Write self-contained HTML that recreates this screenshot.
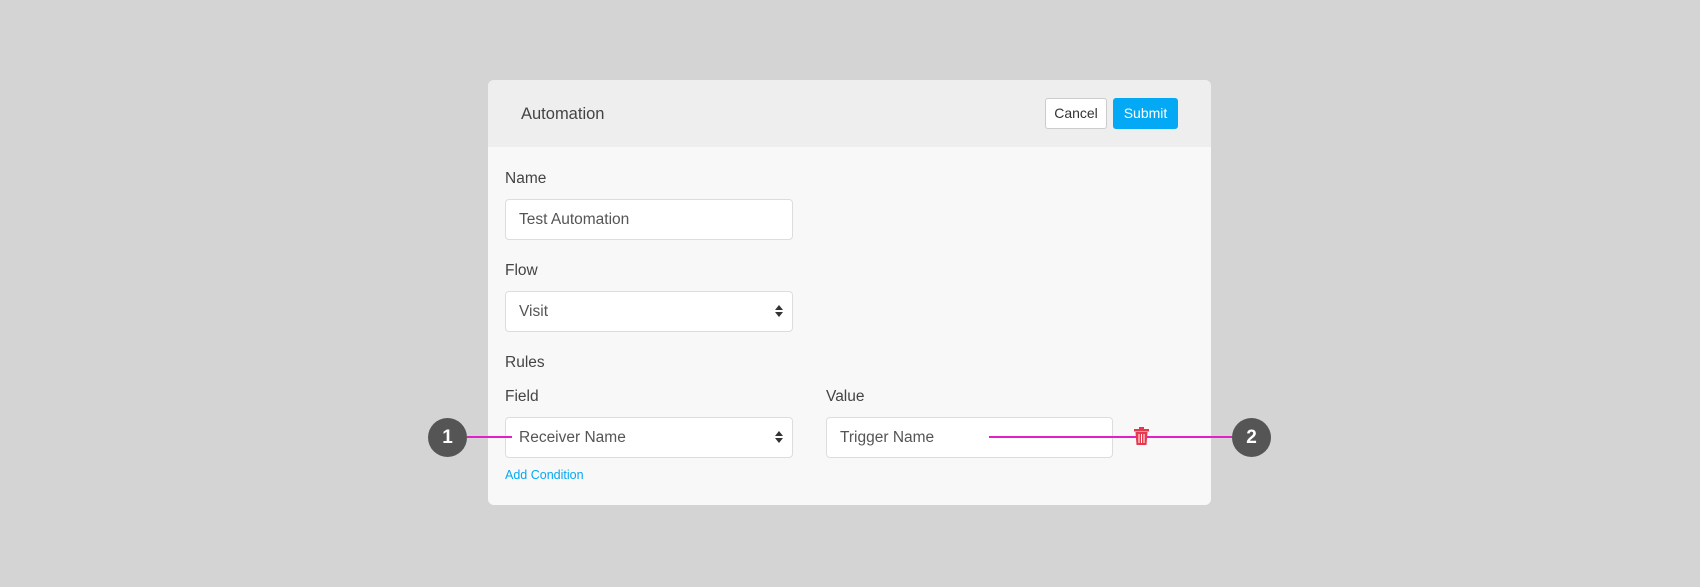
<!DOCTYPE html><html><head><style>
body{margin:0;width:1700px;height:587px;background:#d4d4d4;font-family:"Liberation Sans",sans-serif;position:relative;overflow:hidden;color:#444}
.card{position:absolute;left:488px;top:80px;width:723px;height:425px;background:#f8f8f8;border-radius:6px;overflow:hidden}
.hd{height:67px;background:#eee;position:relative}
.a{position:absolute}
.lbl{position:absolute;font-size:15.5px;color:#444}
.inp{position:absolute;background:#fff;border:1px solid #ddd;border-radius:4px;box-sizing:border-box;height:41px;font-size:15.5px;color:#555;padding-left:13px;line-height:40px}
.arr{position:absolute;right:13px;top:13px;width:0;height:0}
.arr:before{content:"";position:absolute;left:-4px;top:0;border:4px solid transparent;border-bottom:5px solid #333;border-top:0}
.arr:after{content:"";position:absolute;left:-4px;top:7px;border:4px solid transparent;border-top:5px solid #333;border-bottom:0}
.c{position:absolute;width:39px;height:39px;border-radius:50%;background:#555;color:#fff;font-weight:bold;font-size:19px;text-align:center;line-height:39px}
.ln{position:absolute;height:2px;background:#e020c8}
</style></head><body>
<div class="card">
<div class="hd">
<div class="a" style="left:33px;top:25px;font-size:16.5px;color:#444">Automation</div>
<div class="a" style="left:557px;top:18px;width:62px;height:31px;box-sizing:border-box;background:#fff;border:1px solid #ccc;border-radius:3px;font-size:14px;text-align:center;line-height:29px;color:#333">Cancel</div>
<div class="a" style="left:625px;top:18px;width:65px;height:31px;background:#03a9f4;border-radius:3px;font-size:14px;text-align:center;line-height:31px;color:#fff">Submit</div>
</div>
<div class="lbl" style="left:17px;top:90px">Name</div>
<div class="inp" style="left:17px;top:119px;width:288px">Test Automation</div>
<div class="lbl" style="left:17px;top:182px">Flow</div>
<div class="inp" style="left:17px;top:211px;width:288px">Visit<span class="arr"></span></div>
<div class="lbl" style="left:17px;top:274px">Rules</div>
<div class="lbl" style="left:17px;top:308px">Field</div>
<div class="lbl" style="left:338px;top:308px">Value</div>
<div class="inp" style="left:17px;top:337px;width:288px">Receiver Name<span class="arr"></span></div>
<div class="inp" style="left:338px;top:337px;width:287px">Trigger Name</div>
<div class="a" style="left:17px;top:388px;font-size:12.5px;color:#03a9f4">Add Condition</div>
</div>
<div class="ln" style="left:467px;top:436px;width:45px"></div>
<div class="ln" style="left:989px;top:436px;width:244px"></div>
<svg class="a" style="left:1134px;top:427px" width="15" height="18" viewBox="0 0 15 18"><rect x="0" y="2" width="15" height="2.5" fill="#e53950"/><rect x="5" y="0" width="5" height="3" fill="#e53950"/><path d="M1.5 5h12l-1 13h-10z" fill="#e53950"/><path d="M5 7v9M7.5 7v9M10 7v9" stroke="#fff" stroke-width="1"/></svg>
<div class="c" style="left:428px;top:418px">1</div>
<div class="c" style="left:1232px;top:418px">2</div>
</body></html>
